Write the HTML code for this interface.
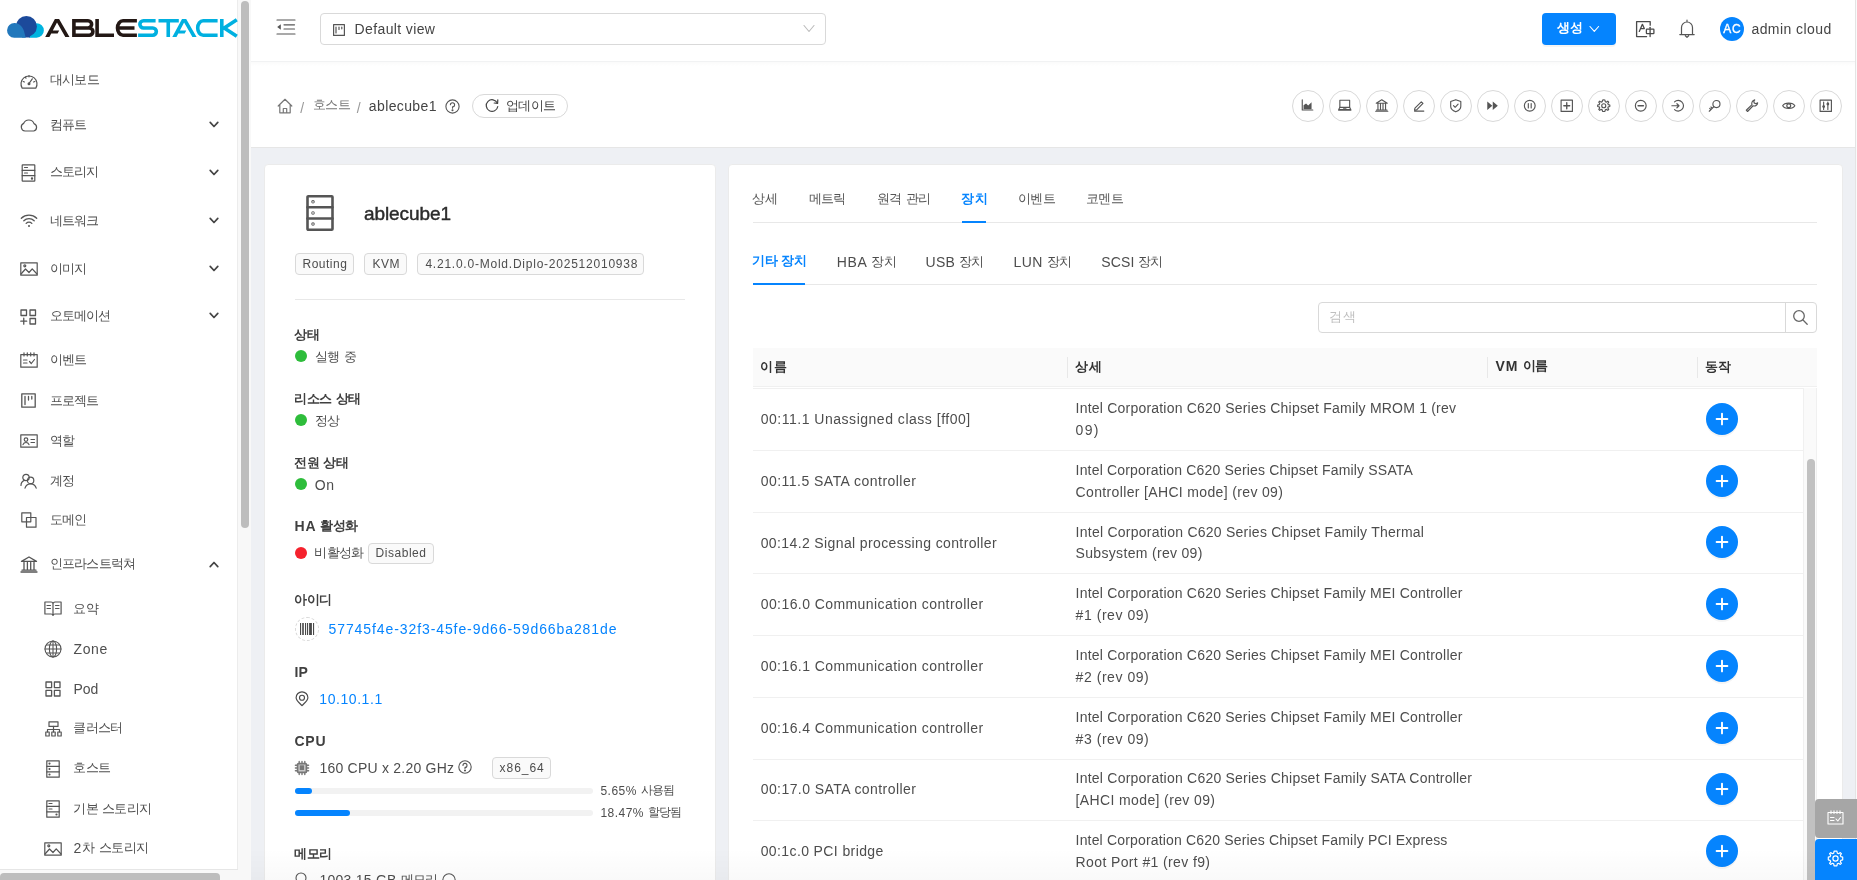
<!DOCTYPE html><html><head><meta charset='utf-8'><style>
*{box-sizing:border-box;margin:0;padding:0}
html,body{width:1857px;height:880px;overflow:hidden;background:#eef0f4;font-family:"Liberation Sans",sans-serif;}
.t{position:absolute;white-space:pre;}
.b{position:absolute;}
.ic{position:absolute;overflow:visible;}
</style></head><body><div id='root' style='position:absolute;left:0;top:0;width:1857px;height:880px;will-change:transform'><div class="b" style="left:0px;top:0px;width:238px;height:880px;background:#fff;"></div>
<div class="b" style="left:237px;top:0px;width:1px;height:870px;background:#ececec;"></div>
<div class="b" style="left:0px;top:869px;width:238px;height:1px;background:#e6e6e6;"></div>
<div class="b" style="left:238px;top:0px;width:13px;height:880px;background:#f8f8f8;"></div>
<div class="b" style="left:0px;top:870px;width:238px;height:10px;background:#f8f8f8;"></div>
<div class="b" style="left:241px;top:1px;width:8px;height:527px;background:#bdbdbd;border-radius:4px;"></div>
<div class="b" style="left:0px;top:873px;width:220px;height:12px;background:#bdbdbd;border-radius:4px;"></div>
<div class="b" style="left:251px;top:0px;width:1604px;height:61px;background:#fff;z-index:2"></div>
<div class="b" style="left:251px;top:61px;width:1604px;height:1px;background:#f1f2f3;z-index:2"></div>
<div class="b" style="left:251px;top:62px;width:1604px;height:4px;background:linear-gradient(rgba(0,0,0,0.018),rgba(0,0,0,0));z-index:2"></div>
<div class="b" style="left:251px;top:62px;width:1604px;height:86px;background:#fff;border-bottom:1px solid #e6e6e6;"></div>
<div class="b" style="left:1855px;top:0px;width:2px;height:880px;background:#fafafa;border-left:1px solid #e4e4e4;"></div>
<div class="b" style="left:264px;top:164px;width:452px;height:760px;background:#fff;border:1px solid #ebebeb;border-radius:4px;"></div>
<div class="b" style="left:728px;top:164px;width:1115px;height:760px;background:#fff;border:1px solid #ebebeb;border-radius:4px;"></div>
<svg class="ic" style="left:0;top:0" width="240" height="50" viewBox="0 0 240 50">
<path d="M26,37.7 H36.6 A7.25,7.25 0 0 0 36.6,23.2 A7.25,7.25 0 0 0 29.35,30.45 V37.7 Z" fill="#00b4e0"/>
<circle cx="26.4" cy="26.4" r="10.5" fill="#1c4a9b"/>
<path d="M22,32 H30 V37.5 H22 Z" fill="#1c4a9b"/>
<path d="M14.2,37.7 A7.35,7.35 0 0 1 14.6,23 C19.5,23 23.6,27.5 24.6,33.5 L25.8,37.7 Z" fill="#2278bc"/>
<g fill="#231815"><path d="M45.2,37 L54.9,18.9 L59.1,18.9 L69.5,37 L65.3,37 L57,22.6 L49.4,37 Z M51.5,30.6 H59.2 L57.6,33.4 H50 Z"/></g>
<g fill="none" stroke="#231815" stroke-width="3.6" stroke-linejoin="miter">
<path d="M73.9,37 V20.7 H88 A3.625,3.625 0 0 1 88,27.95 H73.9 M88,27.95 H89.3 A3.625,3.625 0 0 1 89.3,35.2 H73.9"/>
<path d="M97.1,18.9 V35.2 H114"/>
<path d="M136.9,20.7 H123 A5.5,7.25 0 0 0 123,35.2 H136.9 M117.5,27.95 H134.5"/>
</g>
<g fill="#00b0e0"><path d="M172.3,37 L182,18.9 L186.2,18.9 L196.6,37 L192.4,37 L184.1,22.6 L176.5,37 Z M178.6,30.6 H186.3 L184.7,33.4 H177.1 Z"/></g>
<g fill="none" stroke="#00b0e0" stroke-width="3.6" stroke-linejoin="miter">
<path d="M155.6,20.7 H143.5 A3.625,3.625 0 0 0 143.5,27.95 H152.7 A3.625,3.625 0 0 1 152.7,35.2 H138.1"/>
<path d="M158.5,20.7 H178.8 M168.25,20.7 V37"/>
<path d="M217.6,20.7 H203.2 A5.5,7.25 0 0 0 203.2,35.2 H217.6"/>
<path d="M221.8,18.9 V37 M236.8,19.7 L224.2,27.95 L236.8,36.3"/>
</g></svg>
<div class="t" style="left:49.60px;top:72.42px;font-size:14px;line-height:14px;color:#4f4f4f;"><span style="font-size:13.02px;letter-spacing:-0.600px">대시보드</span></div>
<div class="t" style="left:49.60px;top:116.52px;font-size:14px;line-height:14px;color:#4f4f4f;"><span style="font-size:13.02px;letter-spacing:-0.600px">컴퓨트</span></div>
<svg class="ic" style="left:209px;top:121px;" width="10" height="7" viewBox="0 0 10 7" fill="none" stroke="#444" stroke-width="1.7" stroke-linecap="round" stroke-linejoin="round"><path d="M1.2,1.4 L5,5.5 L8.8,1.4"/></svg>
<div class="t" style="left:49.60px;top:164.32px;font-size:14px;line-height:14px;color:#4f4f4f;"><span style="font-size:13.02px;letter-spacing:-0.733px">스토리지</span></div>
<svg class="ic" style="left:209px;top:169px;" width="10" height="7" viewBox="0 0 10 7" fill="none" stroke="#444" stroke-width="1.7" stroke-linecap="round" stroke-linejoin="round"><path d="M1.2,1.4 L5,5.5 L8.8,1.4"/></svg>
<div class="t" style="left:49.60px;top:212.62px;font-size:14px;line-height:14px;color:#4f4f4f;"><span style="font-size:13.02px;letter-spacing:-0.733px">네트워크</span></div>
<svg class="ic" style="left:209px;top:217px;" width="10" height="7" viewBox="0 0 10 7" fill="none" stroke="#444" stroke-width="1.7" stroke-linecap="round" stroke-linejoin="round"><path d="M1.2,1.4 L5,5.5 L8.8,1.4"/></svg>
<div class="t" style="left:49.60px;top:260.72px;font-size:14px;line-height:14px;color:#4f4f4f;"><span style="font-size:13.02px;letter-spacing:-0.600px">이미지</span></div>
<svg class="ic" style="left:209px;top:265px;" width="10" height="7" viewBox="0 0 10 7" fill="none" stroke="#444" stroke-width="1.7" stroke-linecap="round" stroke-linejoin="round"><path d="M1.2,1.4 L5,5.5 L8.8,1.4"/></svg>
<div class="t" style="left:49.60px;top:308.22px;font-size:14px;line-height:14px;color:#4f4f4f;"><span style="font-size:13.02px;letter-spacing:-0.800px">오토메이션</span></div>
<svg class="ic" style="left:209px;top:312px;" width="10" height="7" viewBox="0 0 10 7" fill="none" stroke="#444" stroke-width="1.7" stroke-linecap="round" stroke-linejoin="round"><path d="M1.2,1.4 L5,5.5 L8.8,1.4"/></svg>
<div class="t" style="left:49.60px;top:352.32px;font-size:14px;line-height:14px;color:#4f4f4f;"><span style="font-size:13.02px;letter-spacing:-0.600px">이벤트</span></div>
<div class="t" style="left:49.60px;top:392.72px;font-size:14px;line-height:14px;color:#4f4f4f;"><span style="font-size:13.02px;letter-spacing:-0.733px">프로젝트</span></div>
<div class="t" style="left:49.60px;top:432.72px;font-size:14px;line-height:14px;color:#4f4f4f;"><span style="font-size:13.02px;letter-spacing:-0.200px">역할</span></div>
<div class="t" style="left:49.60px;top:472.72px;font-size:14px;line-height:14px;color:#4f4f4f;"><span style="font-size:13.02px;letter-spacing:-0.200px">계정</span></div>
<div class="t" style="left:49.60px;top:512.12px;font-size:14px;line-height:14px;color:#4f4f4f;"><span style="font-size:13.02px;letter-spacing:-0.600px">도메인</span></div>
<div class="t" style="left:49.60px;top:556.22px;font-size:14px;line-height:14px;color:#4f4f4f;"><span style="font-size:13.02px;letter-spacing:-0.767px">인프라스트럭쳐</span></div>
<svg class="ic" style="left:209px;top:561px;" width="10" height="7" viewBox="0 0 10 7" fill="none" stroke="#444" stroke-width="1.7" stroke-linecap="round" stroke-linejoin="round"><path d="M1.2,5.6 L5,1.5 L8.8,5.6"/></svg>
<div class="t" style="left:73.40px;top:600.72px;font-size:14px;line-height:14px;color:#4f4f4f;"><span style="font-size:13.02px;letter-spacing:0.100px">요약</span></div>
<div class="t" style="left:73.40px;top:642.00px;font-size:14px;line-height:14px;color:#4f4f4f;"><span style="letter-spacing:0.693px">Zone</span></div>
<div class="t" style="left:73.40px;top:682.00px;font-size:14px;line-height:14px;color:#4f4f4f;"><span style="letter-spacing:0.039px">Pod</span></div>
<div class="t" style="left:73.40px;top:720.32px;font-size:14px;line-height:14px;color:#4f4f4f;"><span style="font-size:13.02px;letter-spacing:-0.733px">클러스터</span></div>
<div class="t" style="left:73.40px;top:760.22px;font-size:14px;line-height:14px;color:#4f4f4f;"><span style="font-size:13.02px;letter-spacing:-0.600px">호스트</span></div>
<div class="t" style="left:73.40px;top:800.72px;font-size:14px;line-height:14px;color:#4f4f4f;"><span style="font-size:13.02px;letter-spacing:-0.682px">기본</span> <span style="font-size:13.02px;letter-spacing:-0.682px">스토리지</span></div>
<div class="t" style="left:73.40px;top:840.72px;font-size:14px;line-height:14px;color:#4f4f4f;"><span style="letter-spacing:0.692px">2</span><span style="font-size:13.44px;letter-spacing:-0.638px;position:relative;top:-1px">차</span><span style="letter-spacing:0.692px"> </span><span style="font-size:13.44px;letter-spacing:-0.638px;position:relative;top:-1px">스토리지</span></div>
<svg class="ic" style="left:20px;top:73px;" width="18" height="16" viewBox="0 0 18 16" fill="none" stroke="#555" stroke-width="1.2" stroke-linecap="round" stroke-linejoin="round"><path d="M2.2,15.2 A8,8 0 1 1 15.8,15.2 Z"/><path d="M9,10.5 L12.3,5.8"/><circle cx="9" cy="10.8" r="0.9" fill="#555"/><path d="M3.2,8.5 L4.4,9 M5.3,4.2 L6,5.2 M9,2.6 V3.8 M14.8,8.5 L13.6,9"/></svg>
<svg class="ic" style="left:20px;top:118px;" width="18" height="14" viewBox="0 0 18 14" fill="none" stroke="#555" stroke-width="1.2" stroke-linecap="round" stroke-linejoin="round"><path d="M5,13 A4,4 0 0 1 3.6,5.4 A5.6,5.6 0 0 1 14,5.6 A3.9,3.9 0 0 1 13.8,13 Z"/></svg>
<svg class="ic" style="left:21px;top:164px;" width="15" height="18" viewBox="0 0 15 18" fill="none" stroke="#555" stroke-width="1.2" stroke-linecap="round" stroke-linejoin="round"><rect x="1.2" y="0.8" width="12.6" height="16.4" rx="0.5"/><path d="M1.2,6.3 H13.8 M1.2,11.7 H13.8 M3.5,3.5 H6.5 M3.5,9 H6.5"/><circle cx="11" cy="14.5" r="0.6" fill="#555"/></svg>
<svg class="ic" style="left:20px;top:213px;" width="18" height="15" viewBox="0 0 18 15" fill="none" stroke="#555" stroke-width="1.3" stroke-linecap="round" stroke-linejoin="round"><path d="M1.3,5.2 A11,11 0 0 1 16.7,5.2 M3.8,7.8 A7.4,7.4 0 0 1 14.2,7.8 M6.2,10.4 A3.8,3.8 0 0 1 11.8,10.4"/><circle cx="9" cy="13" r="1" fill="#555" stroke="none"/></svg>
<svg class="ic" style="left:20px;top:262px;" width="18" height="14" viewBox="0 0 18 14" fill="none" stroke="#555" stroke-width="1.2" stroke-linecap="round" stroke-linejoin="round"><rect x="0.8" y="0.8" width="16.4" height="12.4"/><path d="M1,12 L5.5,7 L9,10.5 L12.2,6.8 L17,12"/><circle cx="4.8" cy="3.8" r="1" /></svg>
<svg class="ic" style="left:20px;top:309px;" width="17" height="16" viewBox="0 0 17 16" fill="none" stroke="#555" stroke-width="1.3" stroke-linecap="round" stroke-linejoin="round"><rect x="1" y="1" width="5.5" height="5.5"/><rect x="10" y="1" width="5.5" height="5.5"/><rect x="10" y="9.5" width="5.5" height="5.5"/><path d="M3.75,9.2 V15.2 M0.8,12.2 H6.7"/></svg>
<svg class="ic" style="left:20px;top:352px;" width="18" height="16" viewBox="0 0 18 16" fill="none" stroke="#555" stroke-width="1.2" stroke-linecap="round" stroke-linejoin="round"><rect x="0.8" y="2.6" width="16.4" height="12.6"/><path d="M4,0.8 V4 M7.3,0.8 V4 M10.7,0.8 V4 M14,0.8 V4 M3.5,8 H7 M3.5,11 H7 M9.5,9.5 L11.3,11.5 L14.5,7.5"/></svg>
<svg class="ic" style="left:21px;top:393px;" width="15" height="15" viewBox="0 0 15 15" fill="none" stroke="#555" stroke-width="1.3" stroke-linecap="round" stroke-linejoin="round"><rect x="0.8" y="0.8" width="13.4" height="13.4"/><path d="M4,3.5 V11.5 M7.5,3.5 V7 M10.8,3.5 V6"/></svg>
<svg class="ic" style="left:20px;top:434px;" width="18" height="14" viewBox="0 0 18 14" fill="none" stroke="#555" stroke-width="1.2" stroke-linecap="round" stroke-linejoin="round"><rect x="0.8" y="0.8" width="16.4" height="12.4"/><circle cx="6" cy="5.6" r="1.8"/><path d="M3,10.6 A3.2,3.2 0 0 1 9,10.6 M11,5.5 H14.5 M11,8.5 H14.5"/></svg>
<svg class="ic" style="left:20px;top:473px;" width="17" height="16" viewBox="0 0 17 16" fill="none" stroke="#555" stroke-width="1.2" stroke-linecap="round" stroke-linejoin="round"><circle cx="6" cy="4.5" r="3.2"/><path d="M1,12.5 A5.5,5.5 0 0 1 4.3,7.4"/><circle cx="10.6" cy="7.4" r="3.2"/><path d="M5,15.2 A5.8,5.8 0 0 1 16.2,15.2"/></svg>
<svg class="ic" style="left:21px;top:512px;" width="16" height="16" viewBox="0 0 16 16" fill="none" stroke="#555" stroke-width="1.2" stroke-linecap="round" stroke-linejoin="round"><rect x="0.8" y="0.8" width="9" height="9"/><rect x="5.5" y="5.5" width="9.5" height="9.7"/></svg>
<svg class="ic" style="left:20px;top:556px;" width="18" height="17" viewBox="0 0 18 17" fill="none" stroke="#555" stroke-width="1.3" stroke-linecap="round" stroke-linejoin="round"><path d="M1.5,5.4 L9,1 L16.5,5.4 Z M1,16 H17 M2,14.2 H16 M4,6.5 V14 M7.4,6.5 V14 M10.7,6.5 V14 M14,6.5 V14"/></svg>
<svg class="ic" style="left:44px;top:601px;" width="18" height="15" viewBox="0 0 18 15" fill="none" stroke="#555" stroke-width="1.2" stroke-linecap="round" stroke-linejoin="round"><path d="M0.9,1 H7 A2,2 0 0 1 9,3 A2,2 0 0 1 11,1 H17.1 V13 H11 A2,2 0 0 0 9,14.5 A2,2 0 0 0 7,13 H0.9 Z M9,3 V14.5 M3,4.5 H6.5 M3,7.5 H6.5 M11.5,4.5 H15 M11.5,7.5 H15"/></svg>
<svg class="ic" style="left:44px;top:640px;" width="18" height="18" viewBox="0 0 18 18" fill="none" stroke="#555" stroke-width="1.1" stroke-linecap="round" stroke-linejoin="round"><circle cx="9" cy="9" r="8"/><ellipse cx="9" cy="9" rx="3.6" ry="8"/><path d="M1,9 H17 M2.5,5 H15.5 M2.5,13 H15.5 M9,1 V17"/></svg>
<svg class="ic" style="left:45px;top:681px;" width="16" height="16" viewBox="0 0 16 16" fill="none" stroke="#555" stroke-width="1.3" stroke-linecap="round" stroke-linejoin="round"><rect x="1" y="1" width="5.6" height="5.6"/><rect x="9.4" y="1" width="5.6" height="5.6"/><rect x="1" y="9.4" width="5.6" height="5.6"/><rect x="9.4" y="9.4" width="5.6" height="5.6"/></svg>
<svg class="ic" style="left:45px;top:721px;" width="17" height="16" viewBox="0 0 17 16" fill="none" stroke="#555" stroke-width="1.2" stroke-linecap="round" stroke-linejoin="round"><rect x="4" y="0.8" width="9" height="4.6"/><path d="M8.5,5.4 V8.5 M2.5,8.5 H14.5 M2.5,8.5 V11 M8.5,8.5 V11 M14.5,8.5 V11"/><rect x="0.8" y="11" width="3.4" height="4"/><rect x="6.8" y="11" width="3.4" height="4"/><rect x="12.8" y="11" width="3.4" height="4"/></svg>
<svg class="ic" style="left:46px;top:760px;" width="14" height="18" viewBox="0 0 14 18" fill="none" stroke="#555" stroke-width="1.2" stroke-linecap="round" stroke-linejoin="round"><rect x="0.8" y="0.8" width="12.4" height="16.4"/><path d="M0.8,6.3 H13.2 M0.8,11.8 H13.2"/><circle cx="3.5" cy="3.6" r="0.5" fill="#555"/><circle cx="3.5" cy="9" r="0.5" fill="#555"/><circle cx="3.5" cy="14.5" r="0.5" fill="#555"/></svg>
<svg class="ic" style="left:46px;top:800px;" width="14" height="18" viewBox="0 0 14 18" fill="none" stroke="#555" stroke-width="1.2" stroke-linecap="round" stroke-linejoin="round"><rect x="0.8" y="0.8" width="12.4" height="16.4"/><path d="M0.8,6.3 H13.2 M0.8,11.8 H13.2 M3,3.5 H6 M3,9 H6"/><circle cx="10.5" cy="14.5" r="0.5" fill="#555"/></svg>
<svg class="ic" style="left:44px;top:842px;" width="18" height="14" viewBox="0 0 18 14" fill="none" stroke="#555" stroke-width="1.2" stroke-linecap="round" stroke-linejoin="round"><rect x="0.8" y="0.8" width="16.4" height="12.4"/><path d="M1,12 L5.5,7 L9,10.5 L12.2,6.8 L17,12"/><circle cx="4.8" cy="3.8" r="1" /></svg>
<div class="b" style="left:251px;top:0;width:1604px;height:61px;z-index:3">
</div>
<svg class="ic" style="left:277px;top:19px;z-index:4;" width="18" height="16" viewBox="0 0 18 16" fill="none" stroke="#555" stroke-width="1.2" stroke-linecap="round" stroke-linejoin="round"><path d="M0,1 H18 M7,5.8 H17.5 M7,10 H17.5 M0,15 H18"/><path d="M0.2,8 L3.8,5.2 V10.8 Z" fill="#555" stroke="none"/></svg>
<div class="b" style="left:320px;top:13px;width:506px;height:32px;border:1px solid #d9d9d9;border-radius:4px;background:#fff;z-index:4"></div>
<svg class="ic" style="left:333px;top:24px;z-index:4;" width="12" height="12" viewBox="0 0 12 12" fill="none" stroke="#555" stroke-width="1.2" stroke-linecap="round" stroke-linejoin="round"><rect x="0.6" y="0.6" width="10.8" height="10.8"/><path d="M3,3 V9 M6,3 V5.5 M8.8,3 V4.8"/></svg>
<div class="t" style="left:354.60px;top:22.20px;font-size:14px;line-height:14px;color:#444;z-index:4;"><span style="letter-spacing:0.376px">Default view</span></div>
<svg class="ic" style="left:803px;top:24px;z-index:4;" width="12" height="9" viewBox="0 0 12 9" fill="none" stroke="#bbb" stroke-width="1.1" stroke-linecap="round" stroke-linejoin="round"><path d="M1,1.5 L6,7.5 L11,1.5"/></svg>
<div class="b" style="left:1542px;top:13px;width:74px;height:32px;background:#0584fe;border-radius:4px;box-shadow:0 2px 0 rgba(0,0,0,.045);z-index:4"></div>
<div class="t" style="left:1557.00px;top:20.12px;font-size:14px;line-height:14px;color:#fff;font-weight:700;z-index:4;"><span style="font-size:13.02px;letter-spacing:-0.200px">생성</span></div>
<svg class="ic" style="left:1589px;top:25px;z-index:4;" width="11" height="8" viewBox="0 0 11 8" fill="none" stroke="#fff" stroke-width="1.1" stroke-linecap="round" stroke-linejoin="round"><path d="M1,1.5 L5.3,6.3 L9.6,1.5"/></svg>
<svg class="ic" style="left:1635px;top:20px;z-index:4;" width="20" height="18" viewBox="0 0 20 18" fill="none" stroke="#4a4a4a" stroke-width="1.3" stroke-linecap="round" stroke-linejoin="round"><path d="M11.6,16.6 H1.6 V1.6 H15.2 V5.2"/><path d="M4.3,11.4 L7.4,4.3 L9.3,8.6 H6.5"/><rect x="11.4" y="9.1" width="7.5" height="4.5" rx="0.6"/><path d="M15.1,7.3 V16.6"/></svg>
<svg class="ic" style="left:1679px;top:19px;z-index:4;" width="16" height="20" viewBox="0 0 16 20" fill="none" stroke="#555" stroke-width="1.2" stroke-linecap="round" stroke-linejoin="round"><path d="M2.5,15.2 V8.5 A5.5,5.5 0 0 1 13.5,8.5 V15.2 M0.8,15.6 H15.2 M6.3,16.8 L8,18.4 L9.7,16.8 M8,1 V2.8"/></svg>
<div class="b" style="left:1720px;top:17px;width:24px;height:24px;background:#0584fe;border-radius:50%;z-index:4"></div>
<div class="t" style="left:1723.30px;top:23.20px;font-size:12px;line-height:12px;color:#fff;z-index:4;-webkit-text-stroke:0.35px #fff;"><span style="letter-spacing:0.728px">AC</span></div>
<div class="t" style="left:1751.40px;top:21.80px;font-size:14px;line-height:14px;color:#444;z-index:4;"><span style="letter-spacing:0.450px">admin cloud</span></div>
<svg class="ic" style="left:277px;top:98px;" width="16" height="16" viewBox="0 0 16 16" fill="none" stroke="#777" stroke-width="1.2" stroke-linecap="round" stroke-linejoin="round"><path d="M1.2,8 L8,1.3 L14.8,8 M2.8,6.6 V14.8 H13.2 V6.6 M6.3,14.8 V10.5 H9.7 V14.8"/></svg>
<div class="t" style="left:300.20px;top:100.50px;font-size:14px;line-height:14px;color:#999;">/</div>
<div class="t" style="left:312.60px;top:97.22px;font-size:14px;line-height:14px;color:#777;"><span style="font-size:13.02px;letter-spacing:-0.500px">호스트</span></div>
<div class="t" style="left:356.80px;top:100.50px;font-size:14px;line-height:14px;color:#999;">/</div>
<div class="t" style="left:368.80px;top:98.70px;font-size:14px;line-height:14px;color:#444;"><span style="letter-spacing:0.384px">ablecube1</span></div>
<svg class="ic" style="left:445px;top:99px;" width="15" height="15" viewBox="0 0 15 15" fill="none" stroke="#555" stroke-width="1.1" stroke-linecap="round" stroke-linejoin="round"><circle cx="7.5" cy="7.5" r="6.6"/><path d="M5.4,5.8 A2.1,2.1 0 1 1 7.5,7.9 V9.2"/><circle cx="7.5" cy="11.2" r="0.5" fill="#555"/></svg>
<div class="b" style="left:472px;top:94px;width:96px;height:24px;border:1px solid #d9d9d9;border-radius:12px;background:#fff;"></div>
<svg class="ic" style="left:485px;top:98px;" width="14" height="14" viewBox="0 0 14 14" fill="none" stroke="#444" stroke-width="1.2" stroke-linecap="round" stroke-linejoin="round"><path d="M12.3,5 A5.8,5.8 0 1 0 12.8,8.5"/><path d="M12.8,1.8 L12.6,5.4 L9.2,5" /></svg>
<div class="t" style="left:506.00px;top:97.82px;font-size:14px;line-height:14px;color:#444;"><span style="font-size:13.02px;letter-spacing:-0.733px">업데이트</span></div>
<div class="b" style="left:1292px;top:90px;width:32px;height:32px;border:1px solid #d9d9d9;border-radius:50%;background:#fff;"></div>
<svg class="ic" style="left:1301.25px;top:99.25px;" width="13.5" height="13.5" viewBox="0 0 16 16" fill="none" stroke="#555" stroke-width="1.35" stroke-linecap="round" stroke-linejoin="round"><path d="M1.5,1 V13 H14"/><path d="M3,12 V7.5 L6,5.2 L8.5,7.8 L12.5,3.8 V12 Z" fill="#555" stroke="none"/></svg>
<div class="b" style="left:1329px;top:90px;width:32px;height:32px;border:1px solid #d9d9d9;border-radius:50%;background:#fff;"></div>
<svg class="ic" style="left:1338.25px;top:99.25px;" width="13.5" height="13.5" viewBox="0 0 16 16" fill="none" stroke="#555" stroke-width="1.35" stroke-linecap="round" stroke-linejoin="round"><rect x="2.2" y="1.5" width="11.6" height="8.5"/><path d="M0.8,12.5 H15.2 V13.3 H0.8 Z M2.2,10 L0.8,12.5 M13.8,10 L15.2,12.5 M6.5,12.5 V11.5 H9.5 V12.5"/></svg>
<div class="b" style="left:1366px;top:90px;width:32px;height:32px;border:1px solid #d9d9d9;border-radius:50%;background:#fff;"></div>
<svg class="ic" style="left:1375.25px;top:99.25px;" width="13.5" height="13.5" viewBox="0 0 16 16" fill="none" stroke="#555" stroke-width="1.35" stroke-linecap="round" stroke-linejoin="round"><path d="M1.5,5 L8,1 L14.5,5 Z M0.8,14.5 H15.2 M1.8,13 H14.2 M3.5,6 V12.5 M6.5,6 V12.5 M9.5,6 V12.5 M12.5,6 V12.5"/></svg>
<div class="b" style="left:1403px;top:90px;width:32px;height:32px;border:1px solid #d9d9d9;border-radius:50%;background:#fff;"></div>
<svg class="ic" style="left:1412.25px;top:99.25px;" width="13.5" height="13.5" viewBox="0 0 16 16" fill="none" stroke="#555" stroke-width="1.35" stroke-linecap="round" stroke-linejoin="round"><path d="M3,14.3 H14 M3.5,10.8 L11,3.3 L13,5.3 L5.5,12.8 L3,13 Z"/></svg>
<div class="b" style="left:1440px;top:90px;width:32px;height:32px;border:1px solid #d9d9d9;border-radius:50%;background:#fff;"></div>
<svg class="ic" style="left:1449.25px;top:99.25px;" width="13.5" height="13.5" viewBox="0 0 16 16" fill="none" stroke="#555" stroke-width="1.35" stroke-linecap="round" stroke-linejoin="round"><path d="M8,0.8 L14,3 V8.5 C14,12 11,14 8,15.2 C5,14 2,12 2,8.5 V3 Z M5.3,7.8 L7.3,9.8 L10.8,6"/></svg>
<div class="b" style="left:1477px;top:90px;width:32px;height:32px;border:1px solid #d9d9d9;border-radius:50%;background:#fff;"></div>
<svg class="ic" style="left:1486.25px;top:99.25px;" width="13.5" height="13.5" viewBox="0 0 16 16" fill="none" stroke="#555" stroke-width="1.35" stroke-linecap="round" stroke-linejoin="round"><path d="M1.5,3 L7.5,8 L1.5,13 Z M8,3 L14,8 L8,13 Z" fill="#555" stroke="none"/></svg>
<div class="b" style="left:1514px;top:90px;width:32px;height:32px;border:1px solid #d9d9d9;border-radius:50%;background:#fff;"></div>
<svg class="ic" style="left:1523.25px;top:99.25px;" width="13.5" height="13.5" viewBox="0 0 16 16" fill="none" stroke="#555" stroke-width="1.35" stroke-linecap="round" stroke-linejoin="round"><circle cx="8" cy="8" r="6.4"/><path d="M6.3,5.3 V10.7 M9.7,5.3 V10.7"/></svg>
<div class="b" style="left:1551px;top:90px;width:32px;height:32px;border:1px solid #d9d9d9;border-radius:50%;background:#fff;"></div>
<svg class="ic" style="left:1560.25px;top:99.25px;" width="13.5" height="13.5" viewBox="0 0 16 16" fill="none" stroke="#555" stroke-width="1.35" stroke-linecap="round" stroke-linejoin="round"><rect x="1.3" y="1.3" width="13.4" height="13.4"/><path d="M8,4.5 V11.5 M4.5,8 H11.5" stroke-width="1.6"/></svg>
<div class="b" style="left:1588px;top:90px;width:32px;height:32px;border:1px solid #d9d9d9;border-radius:50%;background:#fff;"></div>
<svg class="ic" style="left:1597.25px;top:99.25px;" width="13.5" height="13.5" viewBox="0 0 16 16" fill="none" stroke="#555" stroke-width="1.35" stroke-linecap="round" stroke-linejoin="round"><path d="M8,1 L9.4,1.2 L9.8,3.1 L11.2,3.7 L12.8,2.6 L13.9,3.7 L12.8,5.3 L13.4,6.7 L15.2,7.2 V8.8 L13.4,9.3 L12.8,10.7 L13.9,12.3 L12.8,13.4 L11.2,12.3 L9.8,12.9 L9.4,14.8 H6.6 L6.2,12.9 L4.8,12.3 L3.2,13.4 L2.1,12.3 L3.2,10.7 L2.6,9.3 L0.8,8.8 V7.2 L2.6,6.7 L3.2,5.3 L2.1,3.7 L3.2,2.6 L4.8,3.7 L6.2,3.1 L6.6,1.2 Z"/><circle cx="8" cy="8" r="2.4"/></svg>
<div class="b" style="left:1625px;top:90px;width:32px;height:32px;border:1px solid #d9d9d9;border-radius:50%;background:#fff;"></div>
<svg class="ic" style="left:1634.25px;top:99.25px;" width="13.5" height="13.5" viewBox="0 0 16 16" fill="none" stroke="#555" stroke-width="1.35" stroke-linecap="round" stroke-linejoin="round"><circle cx="8" cy="8" r="6.4"/><path d="M4.8,8 H11.2" stroke-width="1.6"/></svg>
<div class="b" style="left:1662px;top:90px;width:32px;height:32px;border:1px solid #d9d9d9;border-radius:50%;background:#fff;"></div>
<svg class="ic" style="left:1671.25px;top:99.25px;" width="13.5" height="13.5" viewBox="0 0 16 16" fill="none" stroke="#555" stroke-width="1.35" stroke-linecap="round" stroke-linejoin="round"><path d="M4.2,3.4 A6.3,6.3 0 1 1 4.2,12.6 M1,8 H9.5 M7,5.6 L9.5,8 L7,10.4"/></svg>
<div class="b" style="left:1699px;top:90px;width:32px;height:32px;border:1px solid #d9d9d9;border-radius:50%;background:#fff;"></div>
<svg class="ic" style="left:1708.25px;top:99.25px;" width="13.5" height="13.5" viewBox="0 0 16 16" fill="none" stroke="#555" stroke-width="1.35" stroke-linecap="round" stroke-linejoin="round"><circle cx="10" cy="6" r="4.2"/><path d="M7,9 L1.5,14.5 M3.5,12.5 L2,11 M5,11 L3.5,9.5"/></svg>
<div class="b" style="left:1736px;top:90px;width:32px;height:32px;border:1px solid #d9d9d9;border-radius:50%;background:#fff;"></div>
<svg class="ic" style="left:1745.25px;top:99.25px;" width="13.5" height="13.5" viewBox="0 0 16 16" fill="none" stroke="#555" stroke-width="1.35" stroke-linecap="round" stroke-linejoin="round"><path d="M11.5,1.2 A4,4 0 0 0 8.3,6.7 L1.5,13.3 L3,14.8 L9.6,8 A4,4 0 0 0 15,4.6 L12.8,5.6 L10.8,4.6 L10.5,2.2 Z"/></svg>
<div class="b" style="left:1773px;top:90px;width:32px;height:32px;border:1px solid #d9d9d9;border-radius:50%;background:#fff;"></div>
<svg class="ic" style="left:1782.25px;top:99.25px;" width="13.5" height="13.5" viewBox="0 0 16 16" fill="none" stroke="#555" stroke-width="1.35" stroke-linecap="round" stroke-linejoin="round"><path d="M0.8,8 C3,3.8 13,3.8 15.2,8 C13,12.2 3,12.2 0.8,8 Z"/><circle cx="8" cy="8" r="2.3"/></svg>
<div class="b" style="left:1810px;top:90px;width:32px;height:32px;border:1px solid #d9d9d9;border-radius:50%;background:#fff;"></div>
<svg class="ic" style="left:1819.25px;top:99.25px;" width="13.5" height="13.5" viewBox="0 0 16 16" fill="none" stroke="#555" stroke-width="1.35" stroke-linecap="round" stroke-linejoin="round"><rect x="1.3" y="1.3" width="13.4" height="13.4"/><path d="M5.5,3.5 V12.5 M10.5,3.5 V12.5"/><circle cx="5.5" cy="9" r="1" fill="#555"/><circle cx="10.5" cy="6" r="1" fill="#555"/></svg>
<svg class="ic" style="left:305px;top:194px;" width="30" height="38" viewBox="0 0 30 38" fill="none" stroke="#555" stroke-width="2.6" stroke-linecap="round" stroke-linejoin="round"><rect x="2.5" y="2.2" width="25" height="33.6" rx="0.8"/><path d="M2.5,13.2 H27.5 M2.5,24.5 H27.5"/><circle cx="8" cy="7.8" r="0.45" fill="#555"/><circle cx="8" cy="18.9" r="0.45" fill="#555"/><circle cx="8" cy="30" r="0.45" fill="#555"/></svg>
<div class="t" style="left:364.00px;top:204.00px;font-size:19px;line-height:19px;color:#2b2b2b;-webkit-text-stroke:0.45px #2b2b2b;"><span style="letter-spacing:-0.088px">ablecube1</span></div>
<div class="b" style="left:295px;top:253px;width:59px;height:22px;background:#fafafa;border:1px solid #d9d9d9;border-radius:4px;"></div>
<div class="t" style="left:302.50px;top:258.00px;font-size:12px;line-height:12px;color:#4d4d4d;"><span style="letter-spacing:0.504px">Routing</span></div>
<div class="b" style="left:364px;top:253px;width:43px;height:22px;background:#fafafa;border:1px solid #d9d9d9;border-radius:4px;"></div>
<div class="t" style="left:372.40px;top:258.00px;font-size:12px;line-height:12px;color:#4d4d4d;"><span style="letter-spacing:0.492px">KVM</span></div>
<div class="b" style="left:417px;top:253px;width:227px;height:22px;background:#fafafa;border:1px solid #d9d9d9;border-radius:4px;"></div>
<div class="t" style="left:425.40px;top:258.00px;font-size:12px;line-height:12px;color:#4d4d4d;"><span style="letter-spacing:0.770px">4.21.0.0-Mold.Diplo-202512010938</span></div>
<div class="b" style="left:295px;top:299px;width:390px;height:1px;background:#e8e8e8;"></div>
<div class="t" style="left:294.20px;top:326.72px;font-size:14px;line-height:14px;color:#404040;font-weight:700;"><span style="font-size:13.02px;letter-spacing:0.000px">상태</span></div>
<div class="b" style="left:295px;top:350px;width:12px;height:12px;background:#2ebd3b;border-radius:50%;"></div>
<div class="t" style="left:314.70px;top:348.62px;font-size:14px;line-height:14px;color:#4d4d4d;"><span style="font-size:13.02px;letter-spacing:-0.397px">실행</span> <span style="font-size:13.02px;letter-spacing:-0.397px">중</span></div>
<div class="t" style="left:294.20px;top:390.92px;font-size:14px;line-height:14px;color:#404040;font-weight:700;"><span style="font-size:13.02px;letter-spacing:-0.518px">리소스</span> <span style="font-size:13.02px;letter-spacing:-0.518px">상태</span></div>
<div class="b" style="left:295px;top:414px;width:12px;height:12px;background:#2ebd3b;border-radius:50%;"></div>
<div class="t" style="left:314.70px;top:412.72px;font-size:14px;line-height:14px;color:#4d4d4d;"><span style="font-size:13.02px;letter-spacing:-0.700px">정상</span></div>
<div class="t" style="left:294.30px;top:455.02px;font-size:14px;line-height:14px;color:#404040;font-weight:700;"><span style="font-size:13.02px;letter-spacing:-0.523px">전원</span> <span style="font-size:13.02px;letter-spacing:-0.523px">상태</span></div>
<div class="b" style="left:295px;top:478px;width:12px;height:12px;background:#2ebd3b;border-radius:50%;"></div>
<div class="t" style="left:314.70px;top:478.20px;font-size:14px;line-height:14px;color:#4d4d4d;"><span style="letter-spacing:0.613px">On</span></div>
<div class="t" style="left:294.60px;top:519.22px;font-size:14px;line-height:14px;color:#404040;font-weight:700;"><span style="letter-spacing:0.758px">HA </span><span style="font-size:13.44px;letter-spacing:-0.572px;position:relative;top:-1px">활성화</span></div>
<div class="b" style="left:295px;top:547px;width:12px;height:12px;background:#f5222d;border-radius:50%;"></div>
<div class="t" style="left:314.30px;top:545.22px;font-size:14px;line-height:14px;color:#4d4d4d;"><span style="font-size:13.02px;letter-spacing:-0.667px">비활성화</span></div>
<div class="b" style="left:368px;top:543px;width:66px;height:21px;background:#fafafa;border:1px solid #d9d9d9;border-radius:4px;"></div>
<div class="t" style="left:375.60px;top:547.40px;font-size:12px;line-height:12px;color:#4d4d4d;"><span style="letter-spacing:0.528px">Disabled</span></div>
<div class="t" style="left:294.20px;top:592.32px;font-size:14px;line-height:14px;color:#404040;font-weight:700;"><span style="font-size:13.02px;letter-spacing:-0.550px">아이디</span></div>
<div class="b" style="left:295px;top:617px;width:24px;height:24px;border:1px dashed #d9d9d9;border-radius:50%;"></div>
<svg class="ic" style="left:300px;top:622px;" width="15" height="14" viewBox="0 0 15 14" fill="#4a4a4a" stroke="none" stroke-width="0" stroke-linecap="round" stroke-linejoin="round"><rect x="0" y="1" width="1.1" height="12"/><rect x="2.2" y="1" width="1.6" height="12"/><rect x="5" y="1" width="1.1" height="12"/><rect x="7" y="1" width="1.1" height="12"/><rect x="9.1" y="1" width="2.8" height="12"/><rect x="13" y="1" width="1.1" height="12"/></svg>
<div class="t" style="left:328.50px;top:621.80px;font-size:14px;line-height:14px;color:#0584fe;"><span style="letter-spacing:0.911px">57745f4e-32f3-45fe-9d66-59d66ba281de</span></div>
<div class="t" style="left:294.60px;top:665.00px;font-size:14px;line-height:14px;color:#404040;font-weight:700;">IP</div>
<svg class="ic" style="left:295px;top:691px;" width="14" height="16" viewBox="0 0 14 16" fill="none" stroke="#4a4a4a" stroke-width="1.15" stroke-linecap="round" stroke-linejoin="round"><path d="M7,14.6 C3.6,11.2 1.1,9.3 1.1,6.7 A5.9,5.9 0 0 1 12.9,6.7 C12.9,9.3 10.4,11.2 7,14.6 Z"/><circle cx="7" cy="6.7" r="2.5"/></svg>
<div class="t" style="left:319.30px;top:691.70px;font-size:14px;line-height:14px;color:#0584fe;"><span style="letter-spacing:0.564px">10.10.1.1</span></div>
<div class="t" style="left:294.60px;top:733.80px;font-size:14px;line-height:14px;color:#404040;font-weight:700;"><span style="letter-spacing:0.669px">CPU</span></div>
<svg class="ic" style="left:295px;top:761px;" width="14" height="14" viewBox="0 0 14 14" fill="none" stroke="#777" stroke-width="1.1" stroke-linecap="round" stroke-linejoin="round"><rect x="2.6" y="2.6" width="8.8" height="8.8" rx="1" fill="#cfcfcf" stroke-width="1.7"/><rect x="4.7" y="4.3" width="4.4" height="4.8" fill="#777" stroke="none"/><path d="M4.2,0.4 V2.5 M7,0.4 V2.5 M9.8,0.4 V2.5 M4.2,11.5 V13.6 M7,11.5 V13.6 M9.8,11.5 V13.6 M0.4,4.2 H2.5 M0.4,7 H2.5 M0.4,9.8 H2.5 M11.5,4.2 H13.6 M11.5,7 H13.6 M11.5,9.8 H13.6" stroke-width="1.4"/></svg>
<div class="t" style="left:319.40px;top:761.00px;font-size:14px;line-height:14px;color:#4d4d4d;"><span style="letter-spacing:0.233px">160 CPU x 2.20 GHz</span></div>
<svg class="ic" style="left:458px;top:760px;" width="14" height="14" viewBox="0 0 14 14" fill="none" stroke="#555" stroke-width="1.1" stroke-linecap="round" stroke-linejoin="round"><circle cx="7" cy="7" r="6.2"/><path d="M5,5.4 A2,2 0 1 1 7,7.4 V8.6"/><circle cx="7" cy="10.5" r="0.5" fill="#555"/></svg>
<div class="b" style="left:492px;top:757px;width:59px;height:22px;background:#fafafa;border:1px solid #d9d9d9;border-radius:4px;"></div>
<div class="t" style="left:499.60px;top:761.70px;font-size:12px;line-height:12px;color:#4d4d4d;"><span style="letter-spacing:0.965px">x86_64</span></div>
<div class="b" style="left:295px;top:788px;width:298px;height:6px;background:#f2f2f2;border-radius:3px;"></div>
<div class="b" style="left:295px;top:788px;width:17px;height:6px;background:#0584fe;border-radius:3px;"></div>
<div class="b" style="left:295px;top:810px;width:298px;height:6px;background:#f2f2f2;border-radius:3px;"></div>
<div class="b" style="left:295px;top:810px;width:55px;height:6px;background:#0584fe;border-radius:3px;"></div>
<div class="t" style="left:600.50px;top:785.00px;font-size:12px;line-height:12px;color:#4d4d4d;"><span style="letter-spacing:0.450px">5.65% </span><span style="font-size:11.52px;letter-spacing:-0.690px;position:relative;top:-1px">사용됨</span></div>
<div class="t" style="left:600.50px;top:807.00px;font-size:12px;line-height:12px;color:#4d4d4d;"><span style="letter-spacing:0.451px">18.47% </span><span style="font-size:11.52px;letter-spacing:-0.689px;position:relative;top:-1px">할당됨</span></div>
<div class="t" style="left:294.20px;top:845.92px;font-size:14px;line-height:14px;color:#404040;font-weight:700;"><span style="font-size:13.02px;letter-spacing:-0.600px">메모리</span></div>
<svg class="ic" style="left:295px;top:872px;" width="14" height="14" viewBox="0 0 14 14" fill="none" stroke="#555" stroke-width="1.1" stroke-linecap="round" stroke-linejoin="round"><circle cx="6" cy="6" r="5"/><path d="M9.5,9.5 L13,13"/></svg>
<div class="t" style="left:319.50px;top:872.50px;font-size:14px;line-height:14px;color:#4d4d4d;"><span style="letter-spacing:0.243px">1003.15 GB </span><span style="font-size:13.44px;letter-spacing:-1.087px;position:relative;top:-1px">메모리</span></div>
<svg class="ic" style="left:442px;top:873px;" width="14" height="14" viewBox="0 0 14 14" fill="none" stroke="#555" stroke-width="1.1" stroke-linecap="round" stroke-linejoin="round"><circle cx="7" cy="7" r="6.2"/></svg>
<div class="t" style="left:751.90px;top:191.32px;font-size:14px;line-height:14px;color:#555;"><span style="font-size:13.02px;letter-spacing:0.500px">상세</span></div>
<div class="t" style="left:808.80px;top:191.32px;font-size:14px;line-height:14px;color:#555;"><span style="font-size:13.02px;letter-spacing:-0.750px">메트릭</span></div>
<div class="t" style="left:876.90px;top:191.32px;font-size:14px;line-height:14px;color:#555;"><span style="font-size:13.02px;letter-spacing:-0.498px">원격</span> <span style="font-size:13.02px;letter-spacing:-0.498px">관리</span></div>
<div class="t" style="left:960.50px;top:191.32px;font-size:14px;line-height:14px;color:#0584fe;font-weight:700;"><span style="font-size:13.02px;letter-spacing:1.100px">장치</span></div>
<div class="t" style="left:1017.60px;top:191.32px;font-size:14px;line-height:14px;color:#555;"><span style="font-size:13.02px;letter-spacing:-0.400px">이벤트</span></div>
<div class="t" style="left:1086.00px;top:191.32px;font-size:14px;line-height:14px;color:#555;"><span style="font-size:13.02px;letter-spacing:-0.600px">코멘트</span></div>
<div class="b" style="left:753px;top:222px;width:1064px;height:1px;background:#e8e8e8;"></div>
<div class="b" style="left:962px;top:221px;width:24px;height:2px;background:#0584fe;"></div>
<div class="t" style="left:752.00px;top:253.32px;font-size:14px;line-height:14px;color:#0584fe;font-weight:700;"><span style="font-size:13.02px;letter-spacing:-0.373px">기타</span> <span style="font-size:13.02px;letter-spacing:-0.373px">장치</span></div>
<div class="t" style="left:836.70px;top:255.00px;font-size:14px;line-height:14px;color:#4d4d4d;"><span style="letter-spacing:0.650px">HBA </span><span style="font-size:13.44px;letter-spacing:-0.680px;position:relative;top:-1px">장치</span></div>
<div class="t" style="left:925.60px;top:255.00px;font-size:14px;line-height:14px;color:#4d4d4d;"><span style="letter-spacing:0.234px">USB </span><span style="font-size:13.44px;letter-spacing:-1.096px;position:relative;top:-1px">장치</span></div>
<div class="t" style="left:1013.50px;top:255.00px;font-size:14px;line-height:14px;color:#4d4d4d;"><span style="letter-spacing:0.410px">LUN </span><span style="font-size:13.44px;letter-spacing:-0.920px;position:relative;top:-1px">장치</span></div>
<div class="t" style="left:1101.20px;top:255.00px;font-size:14px;line-height:14px;color:#4d4d4d;"><span style="letter-spacing:0.146px">SCSI </span><span style="font-size:13.44px;letter-spacing:-1.184px;position:relative;top:-1px">장치</span></div>
<div class="b" style="left:753px;top:284px;width:1064px;height:1px;background:#e8e8e8;"></div>
<div class="b" style="left:753px;top:283px;width:52px;height:2px;background:#0584fe;"></div>
<div class="b" style="left:1318px;top:302px;width:499px;height:31px;border:1px solid #d9d9d9;border-radius:4px;background:#fff;"></div>
<div class="b" style="left:1785px;top:302px;width:1px;height:31px;background:#d9d9d9;"></div>
<div class="t" style="left:1328.70px;top:309.12px;font-size:14px;line-height:14px;color:#bfbfbf;"><span style="font-size:13.02px;letter-spacing:1.100px">검색</span></div>
<svg class="ic" style="left:1792px;top:309px;" width="17" height="17" viewBox="0 0 17 17" fill="none" stroke="#666" stroke-width="1.3" stroke-linecap="round" stroke-linejoin="round"><circle cx="7" cy="7" r="5.3"/><path d="M11,11 L15.2,15.2"/></svg>
<div class="b" style="left:753px;top:348px;width:1064px;height:39px;background:#fafafa;border-bottom:1px solid #f0f0f0;"></div>
<div class="b" style="left:1067px;top:357px;width:1px;height:21px;background:#e8e8e8;"></div>
<div class="b" style="left:1487px;top:357px;width:1px;height:21px;background:#e8e8e8;"></div>
<div class="b" style="left:1697px;top:357px;width:1px;height:21px;background:#e8e8e8;"></div>
<div class="t" style="left:760.30px;top:358.72px;font-size:14px;line-height:14px;color:#333;font-weight:700;"><span style="font-size:13.02px;letter-spacing:0.300px">이름</span></div>
<div class="t" style="left:1074.80px;top:358.72px;font-size:14px;line-height:14px;color:#333;font-weight:700;"><span style="font-size:13.02px;letter-spacing:0.800px">상세</span></div>
<div class="t" style="left:1495.60px;top:358.72px;font-size:14px;line-height:14px;color:#333;font-weight:700;"><span style="letter-spacing:0.766px">VM </span><span style="font-size:13.44px;letter-spacing:-0.564px;position:relative;top:-1px">이름</span></div>
<div class="t" style="left:1704.70px;top:358.72px;font-size:14px;line-height:14px;color:#333;font-weight:700;"><span style="font-size:13.02px;letter-spacing:0.800px">동작</span></div>
<div class="b" style="left:753px;top:388px;width:1051px;height:1px;background:#f0f0f0;"></div>
<div class="t" style="left:760.70px;top:412.10px;font-size:14px;line-height:14px;color:#4d4d4d;"><span style="letter-spacing:0.515px">00:11.1 Unassigned class [ff00]</span></div>
<div class="t" style="left:1075.60px;top:401.10px;font-size:14px;line-height:14px;color:#4d4d4d;"><span style="letter-spacing:0.211px">Intel Corporation C620 Series Chipset Family MROM 1 (rev</span></div>
<div class="t" style="left:1075.60px;top:422.90px;font-size:14px;line-height:14px;color:#4d4d4d;"><span style="letter-spacing:1.283px">09)</span></div>
<div class="b" style="left:1706px;top:403px;width:32px;height:32px;background:#0584fe;border-radius:50%;box-shadow:0 2px 0 rgba(0,0,0,.045);"></div>
<svg class="ic" style="left:1714px;top:411px;" width="16" height="16" viewBox="0 0 16 16" fill="none" stroke="#fff" stroke-width="1.9" stroke-linecap="round" stroke-linejoin="round"><path d="M8,2.6 V13.4 M2.6,8 H13.4"/></svg>
<div class="b" style="left:753px;top:450px;width:1051px;height:1px;background:#f0f0f0;"></div>
<div class="t" style="left:760.70px;top:473.80px;font-size:14px;line-height:14px;color:#4d4d4d;"><span style="letter-spacing:0.475px">00:11.5 SATA controller</span></div>
<div class="t" style="left:1075.60px;top:462.80px;font-size:14px;line-height:14px;color:#4d4d4d;"><span style="letter-spacing:0.177px">Intel Corporation C620 Series Chipset Family SSATA</span></div>
<div class="t" style="left:1075.60px;top:484.60px;font-size:14px;line-height:14px;color:#4d4d4d;"><span style="letter-spacing:0.349px">Controller [AHCI mode] (rev 09)</span></div>
<div class="b" style="left:1706px;top:465px;width:32px;height:32px;background:#0584fe;border-radius:50%;box-shadow:0 2px 0 rgba(0,0,0,.045);"></div>
<svg class="ic" style="left:1714px;top:473px;" width="16" height="16" viewBox="0 0 16 16" fill="none" stroke="#fff" stroke-width="1.9" stroke-linecap="round" stroke-linejoin="round"><path d="M8,2.6 V13.4 M2.6,8 H13.4"/></svg>
<div class="b" style="left:753px;top:512px;width:1051px;height:1px;background:#f0f0f0;"></div>
<div class="t" style="left:760.70px;top:535.50px;font-size:14px;line-height:14px;color:#4d4d4d;"><span style="letter-spacing:0.383px">00:14.2 Signal processing controller</span></div>
<div class="t" style="left:1075.60px;top:524.50px;font-size:14px;line-height:14px;color:#4d4d4d;"><span style="letter-spacing:0.245px">Intel Corporation C620 Series Chipset Family Thermal</span></div>
<div class="t" style="left:1075.60px;top:546.30px;font-size:14px;line-height:14px;color:#4d4d4d;"><span style="letter-spacing:0.319px">Subsystem (rev 09)</span></div>
<div class="b" style="left:1706px;top:526px;width:32px;height:32px;background:#0584fe;border-radius:50%;box-shadow:0 2px 0 rgba(0,0,0,.045);"></div>
<svg class="ic" style="left:1714px;top:534px;" width="16" height="16" viewBox="0 0 16 16" fill="none" stroke="#fff" stroke-width="1.9" stroke-linecap="round" stroke-linejoin="round"><path d="M8,2.6 V13.4 M2.6,8 H13.4"/></svg>
<div class="b" style="left:753px;top:573px;width:1051px;height:1px;background:#f0f0f0;"></div>
<div class="t" style="left:760.70px;top:597.30px;font-size:14px;line-height:14px;color:#4d4d4d;"><span style="letter-spacing:0.424px">00:16.0 Communication controller</span></div>
<div class="t" style="left:1075.60px;top:586.30px;font-size:14px;line-height:14px;color:#4d4d4d;"><span style="letter-spacing:0.216px">Intel Corporation C620 Series Chipset Family MEI Controller</span></div>
<div class="t" style="left:1075.60px;top:608.10px;font-size:14px;line-height:14px;color:#4d4d4d;"><span style="letter-spacing:0.540px">#1 (rev 09)</span></div>
<div class="b" style="left:1706px;top:588px;width:32px;height:32px;background:#0584fe;border-radius:50%;box-shadow:0 2px 0 rgba(0,0,0,.045);"></div>
<svg class="ic" style="left:1714px;top:596px;" width="16" height="16" viewBox="0 0 16 16" fill="none" stroke="#fff" stroke-width="1.9" stroke-linecap="round" stroke-linejoin="round"><path d="M8,2.6 V13.4 M2.6,8 H13.4"/></svg>
<div class="b" style="left:753px;top:635px;width:1051px;height:1px;background:#f0f0f0;"></div>
<div class="t" style="left:760.70px;top:659.00px;font-size:14px;line-height:14px;color:#4d4d4d;"><span style="letter-spacing:0.424px">00:16.1 Communication controller</span></div>
<div class="t" style="left:1075.60px;top:648.00px;font-size:14px;line-height:14px;color:#4d4d4d;"><span style="letter-spacing:0.216px">Intel Corporation C620 Series Chipset Family MEI Controller</span></div>
<div class="t" style="left:1075.60px;top:669.80px;font-size:14px;line-height:14px;color:#4d4d4d;"><span style="letter-spacing:0.540px">#2 (rev 09)</span></div>
<div class="b" style="left:1706px;top:650px;width:32px;height:32px;background:#0584fe;border-radius:50%;box-shadow:0 2px 0 rgba(0,0,0,.045);"></div>
<svg class="ic" style="left:1714px;top:658px;" width="16" height="16" viewBox="0 0 16 16" fill="none" stroke="#fff" stroke-width="1.9" stroke-linecap="round" stroke-linejoin="round"><path d="M8,2.6 V13.4 M2.6,8 H13.4"/></svg>
<div class="b" style="left:753px;top:697px;width:1051px;height:1px;background:#f0f0f0;"></div>
<div class="t" style="left:760.70px;top:720.70px;font-size:14px;line-height:14px;color:#4d4d4d;"><span style="letter-spacing:0.424px">00:16.4 Communication controller</span></div>
<div class="t" style="left:1075.60px;top:709.70px;font-size:14px;line-height:14px;color:#4d4d4d;"><span style="letter-spacing:0.216px">Intel Corporation C620 Series Chipset Family MEI Controller</span></div>
<div class="t" style="left:1075.60px;top:731.50px;font-size:14px;line-height:14px;color:#4d4d4d;"><span style="letter-spacing:0.540px">#3 (rev 09)</span></div>
<div class="b" style="left:1706px;top:712px;width:32px;height:32px;background:#0584fe;border-radius:50%;box-shadow:0 2px 0 rgba(0,0,0,.045);"></div>
<svg class="ic" style="left:1714px;top:720px;" width="16" height="16" viewBox="0 0 16 16" fill="none" stroke="#fff" stroke-width="1.9" stroke-linecap="round" stroke-linejoin="round"><path d="M8,2.6 V13.4 M2.6,8 H13.4"/></svg>
<div class="b" style="left:753px;top:759px;width:1051px;height:1px;background:#f0f0f0;"></div>
<div class="t" style="left:760.70px;top:782.40px;font-size:14px;line-height:14px;color:#4d4d4d;"><span style="letter-spacing:0.427px">00:17.0 SATA controller</span></div>
<div class="t" style="left:1075.60px;top:771.40px;font-size:14px;line-height:14px;color:#4d4d4d;"><span style="letter-spacing:0.226px">Intel Corporation C620 Series Chipset Family SATA Controller</span></div>
<div class="t" style="left:1075.60px;top:793.20px;font-size:14px;line-height:14px;color:#4d4d4d;"><span style="letter-spacing:0.375px">[AHCI mode] (rev 09)</span></div>
<div class="b" style="left:1706px;top:773px;width:32px;height:32px;background:#0584fe;border-radius:50%;box-shadow:0 2px 0 rgba(0,0,0,.045);"></div>
<svg class="ic" style="left:1714px;top:781px;" width="16" height="16" viewBox="0 0 16 16" fill="none" stroke="#fff" stroke-width="1.9" stroke-linecap="round" stroke-linejoin="round"><path d="M8,2.6 V13.4 M2.6,8 H13.4"/></svg>
<div class="b" style="left:753px;top:820px;width:1051px;height:1px;background:#f0f0f0;"></div>
<div class="t" style="left:760.70px;top:844.10px;font-size:14px;line-height:14px;color:#4d4d4d;"><span style="letter-spacing:0.390px">00:1c.0 PCI bridge</span></div>
<div class="t" style="left:1075.60px;top:833.10px;font-size:14px;line-height:14px;color:#4d4d4d;"><span style="letter-spacing:0.167px">Intel Corporation C620 Series Chipset Family PCI Express</span></div>
<div class="t" style="left:1075.60px;top:854.90px;font-size:14px;line-height:14px;color:#4d4d4d;"><span style="letter-spacing:0.379px">Root Port #1 (rev f9)</span></div>
<div class="b" style="left:1706px;top:835px;width:32px;height:32px;background:#0584fe;border-radius:50%;box-shadow:0 2px 0 rgba(0,0,0,.045);"></div>
<svg class="ic" style="left:1714px;top:843px;" width="16" height="16" viewBox="0 0 16 16" fill="none" stroke="#fff" stroke-width="1.9" stroke-linecap="round" stroke-linejoin="round"><path d="M8,2.6 V13.4 M2.6,8 H13.4"/></svg>
<div class="b" style="left:1803px;top:388px;width:1px;height:492px;background:#f0f0f0;"></div>
<div class="b" style="left:1804px;top:388px;width:13px;height:492px;background:#fafafa;border-right:1px solid #f0f0f0;"></div>
<div class="b" style="left:1807px;top:459px;width:8px;height:440px;background:#c1c1c1;border-radius:4px;"></div>
<div class="b" style="left:251px;top:848px;width:1604px;height:32px;background:linear-gradient(rgba(0,0,0,0),rgba(0,0,0,0.025));z-index:5"></div>
<div class="b" style="left:1815px;top:799px;width:50px;height:39px;background:#a6a6a6;border-radius:4px;z-index:6"></div>
<svg class="ic" style="left:1827px;top:810px;z-index:7" width="17" height="15" viewBox="0 0 17 15" fill="none" stroke="#fff" stroke-width="1.1" stroke-linecap="round" stroke-linejoin="round"><rect x="1" y="2.5" width="15" height="11.5"/><path d="M4,0.8 V3.5 M7,0.8 V3.5 M10,0.8 V3.5 M13,0.8 V3.5 M3.5,7.5 H7 M3.5,10.5 H7 M9,9 L10.8,11 L13.5,7.5"/></svg>
<div class="b" style="left:1815px;top:839px;width:50px;height:45px;background:#0584fe;border-radius:4px;z-index:6"></div>
<svg class="ic" style="left:1827px;top:850px;z-index:7" width="17" height="17" viewBox="0 0 17 17" fill="none" stroke="#fff" stroke-width="1.2" stroke-linecap="round" stroke-linejoin="round"><path d="M8.5,1 L9.9,1.2 L10.3,3.1 L11.7,3.7 L13.3,2.6 L14.4,3.7 L13.3,5.3 L13.9,6.7 L15.7,7.2 V9.8 L13.9,10.3 L13.3,11.7 L14.4,13.3 L13.3,14.4 L11.7,13.3 L10.3,13.9 L9.9,15.8 H7.1 L6.7,13.9 L5.3,13.3 L3.7,14.4 L2.6,13.3 L3.7,11.7 L3.1,10.3 L1.3,9.8 V7.2 L3.1,6.7 L3.7,5.3 L2.6,3.7 L3.7,2.6 L5.3,3.7 L6.7,3.1 L7.1,1.2 Z"/><circle cx="8.5" cy="8.5" r="2.6"/></svg></div></body></html>
